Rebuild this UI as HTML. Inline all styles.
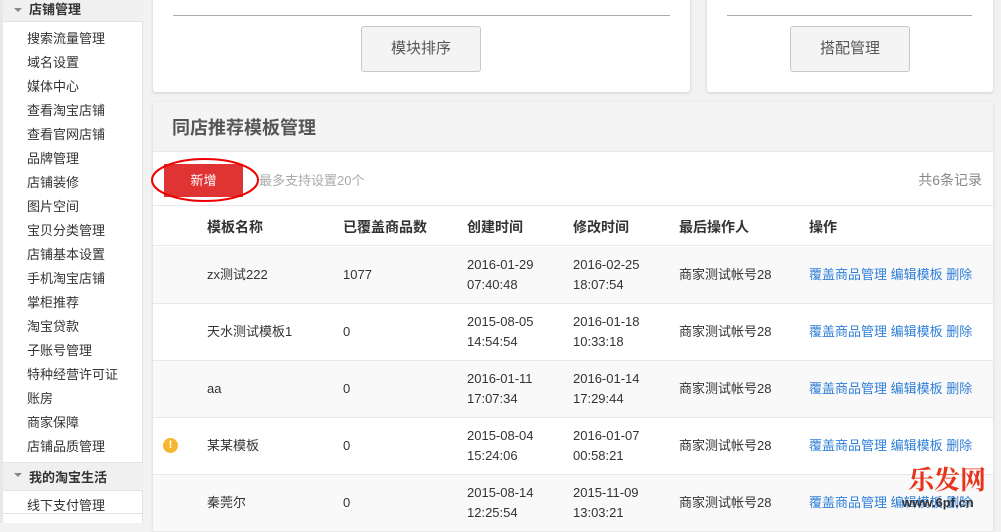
<!DOCTYPE html>
<html><head><meta charset="utf-8"><style>
*{margin:0;padding:0;box-sizing:border-box}
body{width:1001px;height:523px;overflow:hidden;background:#f2f2f2;font-family:"Liberation Sans","Noto Sans CJK SC",sans-serif;position:relative;color:#333}
.side{position:absolute;left:0;top:0;width:143px;height:523px;background:#fff;border-right:1px solid #e2e2e2;border-left:3px solid #e8e8e8}
.sh{position:absolute;left:0;width:140px;height:24px;background:#f0f0f0;font-weight:bold;font-size:13px;line-height:24px;padding-left:26px;color:#333;border-bottom:1px solid #e2e2e2}
.sh:before{content:"";position:absolute;left:11px;top:10px;border:4px solid transparent;border-top:4px solid #888}
.si{position:absolute;left:24px;font-size:13px;color:#333}
.card{position:absolute;background:#fff;border-radius:3px;box-shadow:0 1px 3px rgba(0,0,0,.15)}
.hr{position:absolute;height:1px;background:#aaa}
.btn{position:absolute;width:120px;height:46px;border:1px solid #c8c8c8;border-radius:3px;background:#f4f4f4;font-size:15px;color:#555;text-align:center;line-height:44px}
.p2{position:absolute;left:153px;top:102px;width:840px;height:430px;background:#fff;border-radius:3px;box-shadow:0 1px 3px rgba(0,0,0,.12)}
.ph{height:50px;background:#f4f4f4;border-bottom:1px solid #e8e8e8;font-size:18px;font-weight:bold;color:#555;line-height:52px;padding-left:19px}
.row{position:absolute;left:0;width:840px;border-bottom:1px solid #e8e8e8;font-size:13px}
.c{position:absolute;top:0;line-height:20px}
.a{color:#2f7fd8}
</style></head><body>
<div class="side">
<div class="sh" style="top:-2px">店铺管理</div>
<div class="si" style="top:28px">搜索流量管理</div>
<div class="si" style="top:52px">域名设置</div>
<div class="si" style="top:76px">媒体中心</div>
<div class="si" style="top:100px">查看淘宝店铺</div>
<div class="si" style="top:124px">查看官网店铺</div>
<div class="si" style="top:148px">品牌管理</div>
<div class="si" style="top:172px">店铺装修</div>
<div class="si" style="top:196px">图片空间</div>
<div class="si" style="top:220px">宝贝分类管理</div>
<div class="si" style="top:244px">店铺基本设置</div>
<div class="si" style="top:268px">手机淘宝店铺</div>
<div class="si" style="top:292px">掌柜推荐</div>
<div class="si" style="top:316px">淘宝贷款</div>
<div class="si" style="top:340px">子账号管理</div>
<div class="si" style="top:364px">特种经营许可证</div>
<div class="si" style="top:388px">账房</div>
<div class="si" style="top:412px">商家保障</div>
<div class="si" style="top:436px">店铺品质管理</div>
<div class="sh" style="top:462px;height:29px;line-height:29px;border-top:1px solid #e2e2e2">我的淘宝生活</div>
<div class="si" style="top:495px">线下支付管理</div>
<div style="position:absolute;left:0;top:513px;width:140px;height:1px;background:#e2e2e2"></div>
</div>
<div class="card" style="left:153px;top:-5px;width:537px;height:97px"></div>
<div class="card" style="left:707px;top:-5px;width:286px;height:97px"></div>
<div class="hr" style="left:173px;top:15px;width:497px"></div>
<div class="hr" style="left:727px;top:15px;width:245px"></div>
<div class="btn" style="left:361px;top:26px">模块排序</div>
<div class="btn" style="left:790px;top:26px">搭配管理</div>
<div class="p2">
<div class="ph">同店推荐模板管理</div>
<div style="position:absolute;left:11px;top:62px;width:79px;height:33px;background:#e03333;color:#fff;font-size:13px;text-align:center;line-height:33px">新增</div>
<svg style="position:absolute;left:-3px;top:54px" width="112" height="50"><ellipse cx="55" cy="24" rx="53" ry="21" fill="none" stroke="#e00" stroke-width="2"/></svg>
<div style="position:absolute;left:106px;top:68px;font-size:13px;color:#aaa">最多支持设置20个</div>
<div style="position:absolute;right:11px;top:68px;font-size:14px;color:#888">共6条记录</div>
<div class="row" style="top:103px;height:41px;border-top:1px solid #e8e8e8;font-size:14px;font-weight:bold;color:#333">
<div class="c" style="left:54px;top:11px">模板名称</div><div class="c" style="left:190px;top:11px">已覆盖商品数</div><div class="c" style="left:314px;top:11px">创建时间</div><div class="c" style="left:420px;top:11px">修改时间</div><div class="c" style="left:526px;top:11px">最后操作人</div><div class="c" style="left:656px;top:11px">操作</div></div>
<div class="row" style="top:145px;height:57px;background:#f9f9f9"><div class="c" style="left:54px;top:18px">zx测试222</div><div class="c" style="left:190px;top:18px">1077</div><div class="c" style="left:314px;top:8px">2016-01-29<br>07:40:48</div><div class="c" style="left:420px;top:8px">2016-02-25<br>18:07:54</div><div class="c" style="left:526px;top:18px">商家测试帐号28</div><div class="c a" style="left:656px;top:18px">覆盖商品管理 编辑模板 删除</div></div>
<div class="row" style="top:202px;height:57px"><div class="c" style="left:54px;top:18px">天水测试模板1</div><div class="c" style="left:190px;top:18px">0</div><div class="c" style="left:314px;top:8px">2015-08-05<br>14:54:54</div><div class="c" style="left:420px;top:8px">2016-01-18<br>10:33:18</div><div class="c" style="left:526px;top:18px">商家测试帐号28</div><div class="c a" style="left:656px;top:18px">覆盖商品管理 编辑模板 删除</div></div>
<div class="row" style="top:259px;height:57px;background:#f9f9f9"><div class="c" style="left:54px;top:18px">aa</div><div class="c" style="left:190px;top:18px">0</div><div class="c" style="left:314px;top:8px">2016-01-11<br>17:07:34</div><div class="c" style="left:420px;top:8px">2016-01-14<br>17:29:44</div><div class="c" style="left:526px;top:18px">商家测试帐号28</div><div class="c a" style="left:656px;top:18px">覆盖商品管理 编辑模板 删除</div></div>
<div class="row" style="top:316px;height:57px"><div style="position:absolute;left:10px;top:20px;width:15px;height:15px;border-radius:50%;background:#f5b731;color:#fff;font-size:11px;font-weight:bold;text-align:center;line-height:15px">!</div><div class="c" style="left:54px;top:18px">某某模板</div><div class="c" style="left:190px;top:18px">0</div><div class="c" style="left:314px;top:8px">2015-08-04<br>15:24:06</div><div class="c" style="left:420px;top:8px">2016-01-07<br>00:58:21</div><div class="c" style="left:526px;top:18px">商家测试帐号28</div><div class="c a" style="left:656px;top:18px">覆盖商品管理 编辑模板 删除</div></div>
<div class="row" style="top:373px;height:57px;background:#f9f9f9"><div class="c" style="left:54px;top:18px">秦莞尔</div><div class="c" style="left:190px;top:18px">0</div><div class="c" style="left:314px;top:8px">2015-08-14<br>12:25:54</div><div class="c" style="left:420px;top:8px">2015-11-09<br>13:03:21</div><div class="c" style="left:526px;top:18px">商家测试帐号28</div><div class="c a" style="left:656px;top:18px">覆盖商品管理 编辑模板 删除</div></div>
</div>
<div style="position:absolute;left:908px;top:460px;font-size:26px;font-weight:bold;color:#e8341c;font-family:'Noto Serif CJK SC',serif">乐发网</div>
<div style="position:absolute;left:902px;top:495px;font-size:13px;font-weight:bold;color:#333">www.6pf.cn</div>
</body></html>
